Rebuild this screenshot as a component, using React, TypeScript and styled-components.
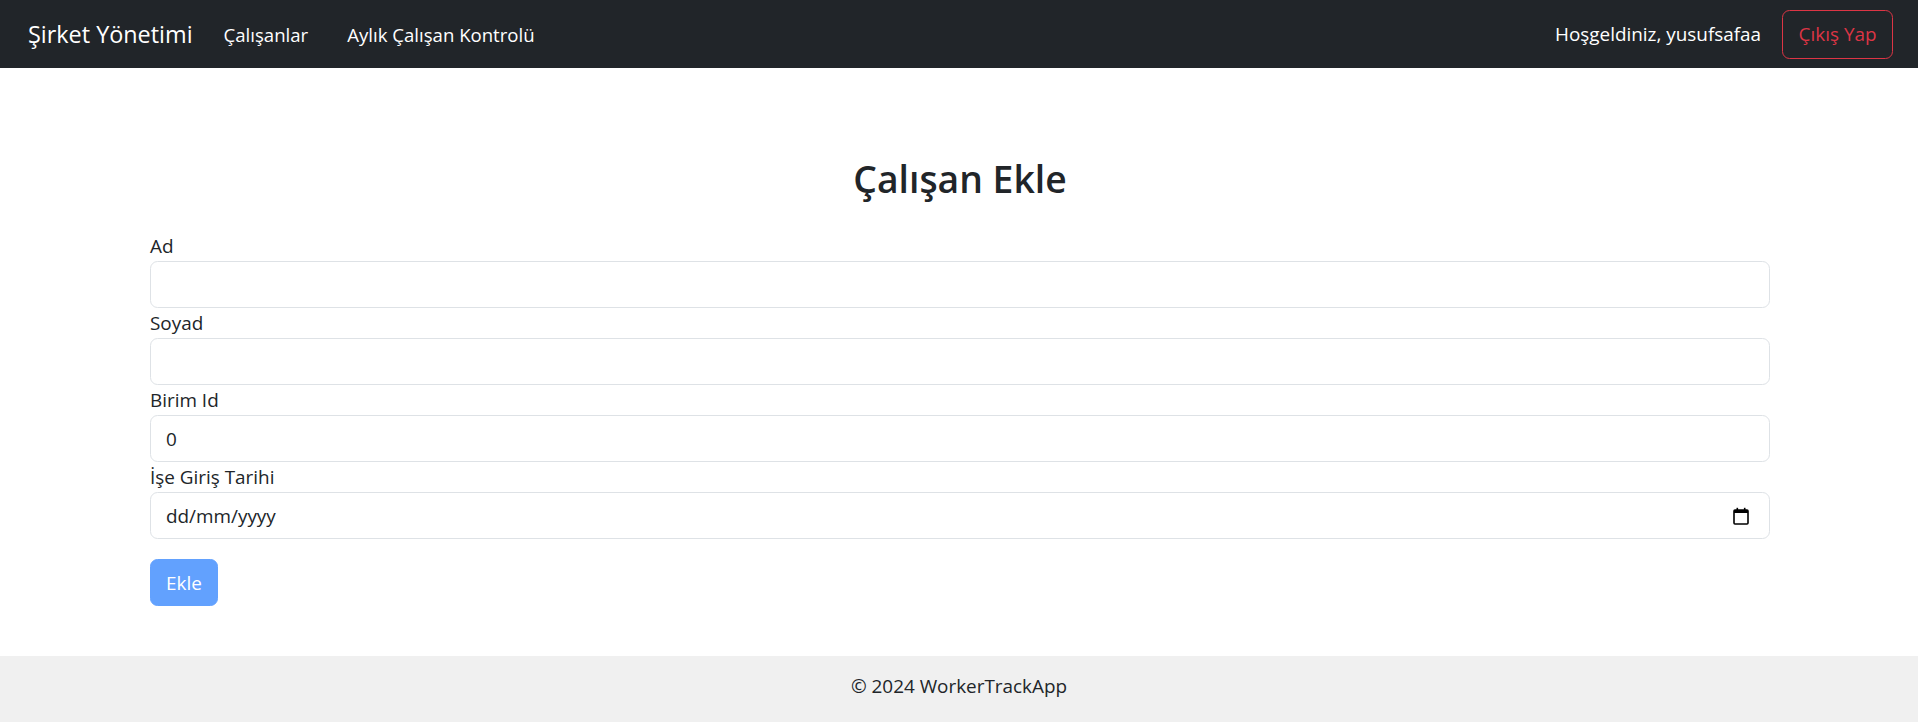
import React from "react";
import styled, { createGlobalStyle } from "styled-components";

const GlobalStyle = createGlobalStyle`
  * { box-sizing: border-box; }
  html, body { margin: 0; padding: 0; }
  body {
    font-family: "Open Sans", "Noto Sans", sans-serif;
    color: #212529;
    background: #ffffff;
  }
`;

const Page = styled.div`
  display: flex;
  flex-direction: column;
  min-height: 722px;
`;

const Navbar = styled.nav`
  height: 68px;
  background: #212529;
  display: flex;
  align-items: center;
  justify-content: space-between;
  padding: 0 25px 0 28px;
`;

const NavLeft = styled.div`
  display: flex;
  align-items: center;
`;

const Brand = styled.a`
  font-size: 23.4px;
  color: #ffffff;
  text-decoration: none;
  margin-right: 31px;
`;

const NavLinks = styled.div`
  display: flex;
  align-items: center;
  gap: 39px;
`;

const NavLink = styled.a`
  font-size: 18.6px;
  color: #ffffff;
  text-decoration: none;
`;

const NavRight = styled.div`
  display: flex;
  align-items: center;
  gap: 21px;
`;

const Welcome = styled.span`
  font-size: 18.9px;
  color: #ffffff;
`;

const LogoutButton = styled.button`
  height: 49px;
  padding: 0 15.5px;
  font-family: inherit;
  font-size: 18.9px;
  color: #dc3545;
  background: transparent;
  border: 1px solid #dc3545;
  border-radius: 7.5px;
`;

const Main = styled.main`
  flex: 1;
  padding-top: 89px;
`;

const Container = styled.div`
  max-width: 1650px;
  margin: 0 auto;
  padding: 0 14px 0 16px;
`;

const Title = styled.h2`
  margin: 0 0 31px;
  text-align: center;
  font-size: 37.3px;
  font-weight: 600;
  line-height: 43px;
`;

const Form = styled.form`
  display: flex;
  flex-direction: column;
  align-items: stretch;
`;

const Label = styled.label`
  display: block;
  font-size: 18.9px;
  line-height: 30px;
`;

const Input = styled.input`
  display: block;
  width: 100%;
  height: 47px;
  padding: 0 15px;
  font-family: inherit;
  font-size: 18.9px;
  color: #212529;
  background: #ffffff;
  border: 1px solid #dee2e6;
  border-radius: 7.5px;
  outline: none;
`;

const DateField = styled.div`
  display: flex;
  align-items: center;
  justify-content: space-between;
  height: 47px;
  padding: 0 20px 0 15px;
  font-size: 18.9px;
  border: 1px solid #dee2e6;
  border-radius: 7.5px;
`;

const SubmitButton = styled.button`
  align-self: flex-start;
  margin-top: 20px;
  height: 47px;
  padding: 0 15px;
  font-family: inherit;
  font-size: 18.9px;
  color: #ffffff;
  background: rgb(98, 161, 254);
  border: 1px solid rgb(98, 161, 254);
  border-radius: 7.5px;
`;

const Footer = styled.footer`
  height: 66px;
  background: #f0f0f0;
  text-align: center;
  font-size: 18.9px;
  line-height: 30px;
  padding-top: 15px;
`;

const CalendarIcon = () => (
  <svg width="16" height="18" viewBox="0 0 16 18" aria-hidden="true">
    <rect x="1" y="3" width="14" height="14" rx="1" fill="none" stroke="#000" strokeWidth="1.6" />
    <rect x="1" y="3" width="14" height="3" fill="#000" />
    <rect x="3.5" y="0.8" width="1.6" height="3" fill="#000" />
    <rect x="10.9" y="0.8" width="1.6" height="3" fill="#000" />
  </svg>
);

export default function App() {
  return (
    <>
      <GlobalStyle />
      <Page>
        <Navbar>
          <NavLeft>
            <Brand href="#">Şirket Yönetimi</Brand>
            <NavLinks>
              <NavLink href="#">Çalışanlar</NavLink>
              <NavLink href="#">Aylık Çalışan Kontrolü</NavLink>
            </NavLinks>
          </NavLeft>
          <NavRight>
            <Welcome>Hoşgeldiniz, yusufsafaa</Welcome>
            <LogoutButton>Çıkış Yap</LogoutButton>
          </NavRight>
        </Navbar>
        <Main>
          <Container>
            <Title>Çalışan Ekle</Title>
            <Form onSubmit={(e) => e.preventDefault()}>
              <Label>Ad</Label>
              <Input type="text" />
              <Label>Soyad</Label>
              <Input type="text" />
              <Label>Birim Id</Label>
              <Input type="text" defaultValue="0" />
              <Label>İşe Giriş Tarihi</Label>
              <DateField>
                <span>dd/mm/yyyy</span>
                <CalendarIcon />
              </DateField>
              <SubmitButton type="submit">Ekle</SubmitButton>
            </Form>
          </Container>
        </Main>
        <Footer>© 2024 WorkerTrackApp</Footer>
      </Page>
    </>
  );
}
